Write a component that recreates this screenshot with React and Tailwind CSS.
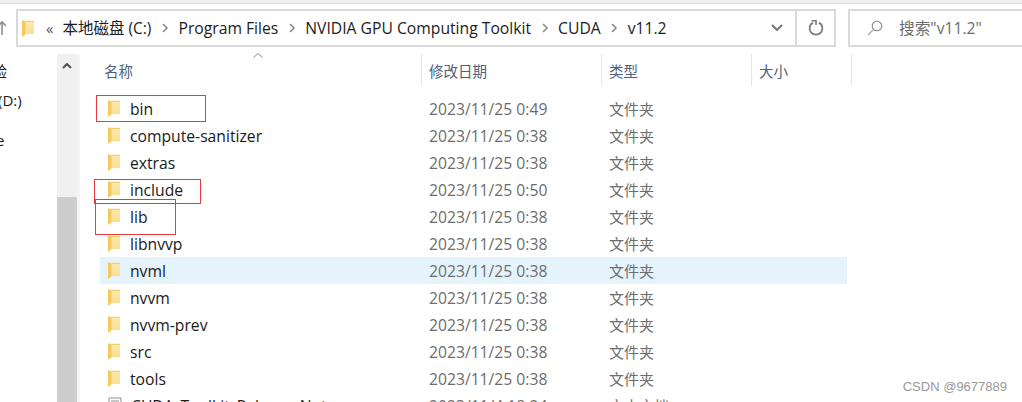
const font = { fontFamily: '"Open Sans", "Noto Sans CJK SC", sans-serif' };

const rows = [
    { name: 'bin', date: '2023/11/25 0:49' },
    { name: 'compute-sanitizer', date: '2023/11/25 0:38' },
    { name: 'extras', date: '2023/11/25 0:38' },
    { name: 'include', date: '2023/11/25 0:50' },
    { name: 'lib', date: '2023/11/25 0:38' },
    { name: 'libnvvp', date: '2023/11/25 0:38' },
    { name: 'nvml', date: '2023/11/25 0:38', active: true },
    { name: 'nvvm', date: '2023/11/25 0:38' },
    { name: 'nvvm-prev', date: '2023/11/25 0:38' },
    { name: 'src', date: '2023/11/25 0:38' },
    { name: 'tools', date: '2023/11/25 0:38' },
];

const crumbs = ['Program Files', 'NVIDIA GPU Computing Toolkit', 'CUDA', 'v11.2'];

const Folder = ({ className }) => (
    <svg viewBox="0 0 12 17" className={className}>
        <defs>
            <linearGradient id="folderFill" x1="0" y1="0" x2="0" y2="1">
                <stop offset="0" stopColor="#fdeab0" />
                <stop offset="1" stopColor="#fbdf8e" />
            </linearGradient>
        </defs>
        <path d="M3 0.5 H12 V14 H3 Z" fill="url(#folderFill)" />
        <path d="M0 0 L3.5 1.5 V14.5 L0 17 Z" fill="#f4ca5e" />
        <path d="M3.5 1 H12 V2 H3.5 Z" fill="#f1cf6e" />
    </svg>
);

const Chevron = () => (
    <svg viewBox="0 0 8 10" className="w-2 h-2.5 shrink-0">
        <path d="M2 1 L6 5 L2 9" fill="none" stroke="#8a8a8a" strokeWidth="1.6" />
    </svg>
);

const App = () => {
    return (
        <div className="relative w-[1022px] h-[402px] overflow-hidden bg-white text-[15.7px]" style={font}>
            {/* top strip */}
            <div className="h-[4px] bg-[#f0f0f0] border-b border-[#dcdcdc]" />

            {/* address bar + search */}
            <div className="flex items-center h-[38px] mt-[5px]">
                <div className="w-[16px] shrink-0 overflow-hidden">
                    <svg viewBox="0 0 8 16" className="w-2 h-4 -ml-[2px]">
                        <path d="M4 15 V2 M0 6 L4 2 L8 6" fill="none" stroke="#8f8f8f" strokeWidth="1.6" />
                    </svg>
                </div>
                <div className="flex items-center w-[820px] h-full border-2 border-[#d9d9d9]">
                    <Folder className="w-[12px] h-[17px] ml-[4px]" />
                    <span className="ml-[12px] text-[15px] text-[#555] leading-none">«</span>
                    <span className="ml-[9px] pt-[2px] text-[15.5px] text-[#1c1c1c] whitespace-nowrap">本地磁盘 (C:)</span>
                    {crumbs.map((c) => (
                        <div key={c} className="flex items-center">
                            <span className="mx-[9.5px]"><Chevron /></span>
                            <span className="pt-[2px] text-[#1c1c1c] whitespace-nowrap">{c}</span>
                        </div>
                    ))}
                    <div className="ml-auto flex h-full items-center">
                        <svg viewBox="0 0 12 8" className="w-3 h-2 mr-[12px]">
                            <path d="M1 1 L6 6 L11 1" fill="none" stroke="#707070" strokeWidth="1.8" />
                        </svg>
                        <div className="w-[39px] h-full border-l-2 border-[#d9d9d9] flex items-center justify-center">
                            <svg viewBox="0 0 16 16" className="w-4 h-4">
                                <path d="M5 2.6 A6.4 6.4 0 1 0 11 2.6" fill="none" stroke="#7a7a7a" strokeWidth="1.8" />
                                <path d="M3.6 0.8 H8 V5" fill="none" stroke="#7a7a7a" strokeWidth="1.6" />
                            </svg>
                        </div>
                    </div>
                </div>
                <div className="flex items-center ml-[12px] flex-1 h-full border-2 border-r-0 border-[#d9d9d9]">
                    <svg viewBox="0 0 16 16" className="w-4 h-4 ml-[17px]">
                        <circle cx="10" cy="6" r="4.8" fill="none" stroke="#8a8a8a" strokeWidth="1.1" />
                        <path d="M6.5 9.5 L1 15" stroke="#a8a8a8" strokeWidth="1.2" />
                    </svg>
                    <span className="ml-[16px] pt-[1px] text-[#6d6d6d] whitespace-nowrap">搜索"v11.2"</span>
                </div>
            </div>

            <div className="flex mt-[7px]">
                {/* nav pane, cut off on the left */}
                <div className="w-[57px] shrink-0 text-[15px] text-[#1c1c1c] overflow-hidden">
                    <div className="-ml-[8px] mt-[7px] leading-[20px]">验</div>
                    <div className="-ml-[2px] mt-[9px] leading-[20px]">(D:)</div>
                    <div className="-ml-[4px] mt-[20px] leading-[20px]">e</div>
                </div>

                {/* scrollbar */}
                <div className="w-[20px] shrink-0 h-[348px] bg-[#f0f0f0] flex flex-col">
                    <div className="h-[143px] flex justify-center pt-[9px]">
                        <svg viewBox="0 0 10 6" className="w-2.5 h-1.5">
                            <path d="M1 5 L5 1 L9 5" fill="none" stroke="#505050" strokeWidth="2" />
                        </svg>
                    </div>
                    <div className="flex-1 bg-[#cdcdcd]" />
                </div>
                <div className="w-[3px] shrink-0 bg-[#f4f4f4]" />

                {/* file list */}
                <div className="flex-1 min-w-0 pl-[20px]">
                    <div className="relative flex h-[32px] items-stretch text-[14.5px] text-[#4c607a]">
                        <svg viewBox="0 0 10 5" className="absolute left-[153px] -top-[1px] w-2.5 h-[5px]">
                            <path d="M0.5 4.5 L5 0.5 L9.5 4.5" fill="none" stroke="#8a8a8a" strokeWidth="1" />
                        </svg>
                        <div className="w-[322px] pl-[4px] pt-[3px] flex items-center border-r border-[#e5e5e5]">名称</div>
                        <div className="w-[180px] pl-[7px] pt-[3px] flex items-center border-r border-[#e5e5e5]">修改日期</div>
                        <div className="w-[150px] pl-[7px] pt-[3px] flex items-center border-r border-[#e5e5e5]">类型</div>
                        <div className="w-[100px] pl-[7px] pt-[3px] flex items-center border-r border-[#e5e5e5]">大小</div>
                    </div>

                    <div className="mt-[9px] w-[747px]">
                        {rows.map((r) => (
                            <div key={r.name} className={`flex items-center h-[27px] ${r.active ? 'bg-[#e5f3fd]' : ''}`}>
                                <div className="w-[321px] flex items-center pl-[8px] text-[#1a1a1a]">
                                    <Folder className="w-[12px] h-[17px]" />
                                    <span className="ml-[10px] pt-[3px]">{r.name}</span>
                                </div>
                                <div className="w-[180px] pl-[8px] pt-[3px] text-[#6d6d6d]">{r.date}</div>
                                <div className="pl-[8px] pt-[1px] text-[15px] text-[#6d6d6d]">文件夹</div>
                            </div>
                        ))}
                        <div className="flex items-center h-[27px]">
                            <div className="w-[321px] flex items-center pl-[8px] text-[#1a1a1a] whitespace-nowrap">
                                <svg viewBox="0 0 14 16" className="w-[14px] h-[16px]">
                                    <path d="M1 1 H13 V15 H1 Z M3 4 H11 M3 7 H11 M3 10 H11" fill="#fff" stroke="#8f8f8f" />
                                </svg>
                                <span className="ml-[9px] pt-[3px]">CUDA_Toolkit_Release_Notes</span>
                            </div>
                            <div className="w-[180px] pl-[8px] pt-[3px] text-[#6d6d6d]">2023/11/4 18:24</div>
                            <div className="pl-[8px] pt-[1px] text-[15px] text-[#6d6d6d]">文本文档</div>
                        </div>
                    </div>
                </div>
            </div>

            {/* red annotation boxes drawn over the screenshot */}
            <div className="absolute left-[96px] top-[95px] w-[110px] h-[27px] border border-[#e8393c]" />
            <div className="absolute left-[94px] top-[179px] w-[107px] h-[25px] border border-[#e8393c]" />
            <div className="absolute left-[95px] top-[199px] w-[81px] h-[36px] border border-[#e8393c]" />

            {/* watermark */}
            <div className="absolute right-[15px] top-[379px] text-[13px] leading-[16px] text-[#999] bg-white/80" style={{ fontFamily: '"Liberation Sans", sans-serif' }}>
                CSDN @9677889
            </div>
        </div>
    );
};

export default App;
